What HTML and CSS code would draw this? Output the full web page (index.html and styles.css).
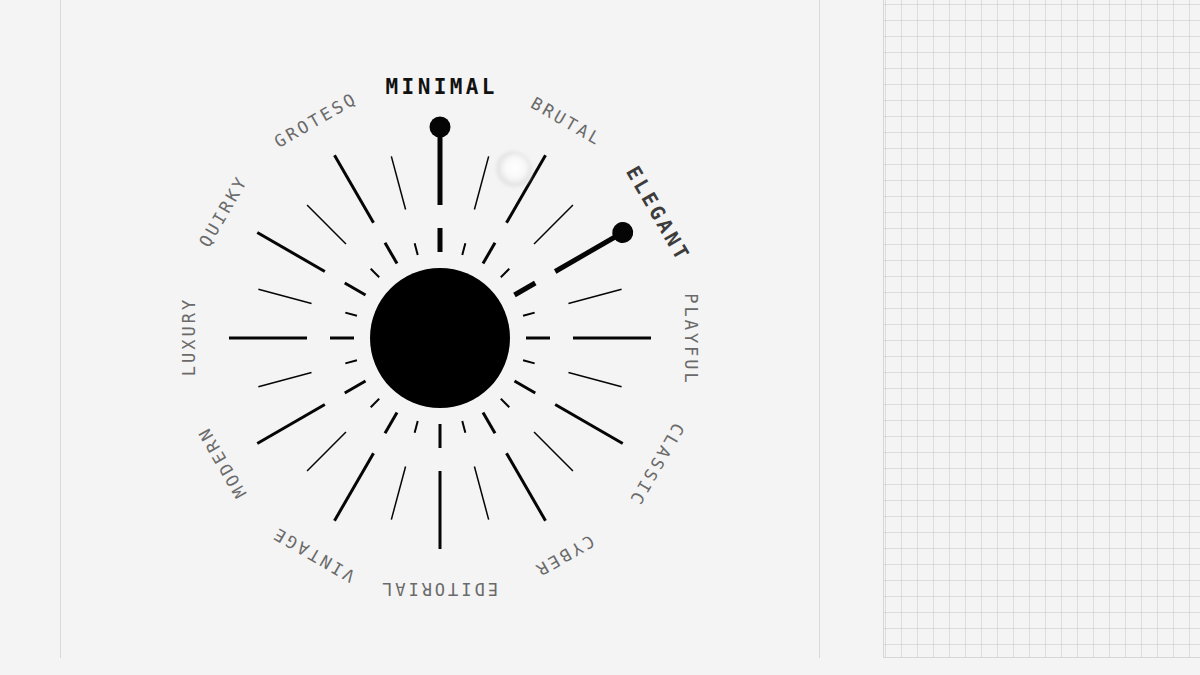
FILE: index.html
```html
<!DOCTYPE html>
<html lang="en">
<head>
<meta charset="utf-8">
<title>Style Dial</title>
<link rel="stylesheet" href="styles.css">
</head>
<body>
<div class="app">
  <div class="gutter"></div>
  <main class="stage">
    <svg class="dial" width="560" height="560" viewBox="0 0 560 560" xmlns="http://www.w3.org/2000/svg">
      <defs>
        <radialGradient id="ghostFill" cx="55%" cy="45%" r="55%">
          <stop offset="0%" stop-color="#ffffff"/>
          <stop offset="50%" stop-color="#f8f8f8"/>
          <stop offset="82%" stop-color="#e2e2e2"/>
          <stop offset="100%" stop-color="#ececec" stop-opacity="0"/>
        </radialGradient>
        <filter id="soft" x="-50%" y="-50%" width="200%" height="200%">
          <feGaussianBlur stdDeviation="1.4"/>
        </filter>
      </defs>
      <g transform="translate(280 280)">
        <g class="rays">
          <g transform="rotate(0)"><line class="ray active" y1="-86" y2="-110"/><line class="ray active" y1="-133" y2="-211"/><circle class="knob" cy="-211" r="10.5"/></g>
          <g transform="rotate(15)"><line class="ray minor-in" y1="-86" y2="-98"/><line class="ray minor-out" y1="-133" y2="-188"/></g>
          <g transform="rotate(30)"><line class="ray major" y1="-86" y2="-110"/><line class="ray major" y1="-133" y2="-211"/></g>
          <g transform="rotate(45)"><line class="ray minor-in" y1="-86" y2="-98"/><line class="ray minor-out" y1="-133" y2="-188"/></g>
          <g transform="rotate(60)"><line class="ray active" y1="-86" y2="-110"/><line class="ray active" y1="-133" y2="-211"/><circle class="knob" cy="-211" r="10.5"/></g>
          <g transform="rotate(75)"><line class="ray minor-in" y1="-86" y2="-98"/><line class="ray minor-out" y1="-133" y2="-188"/></g>
          <g transform="rotate(90)"><line class="ray major" y1="-86" y2="-110"/><line class="ray major" y1="-133" y2="-211"/></g>
          <g transform="rotate(105)"><line class="ray minor-in" y1="-86" y2="-98"/><line class="ray minor-out" y1="-133" y2="-188"/></g>
          <g transform="rotate(120)"><line class="ray major" y1="-86" y2="-110"/><line class="ray major" y1="-133" y2="-211"/></g>
          <g transform="rotate(135)"><line class="ray minor-in" y1="-86" y2="-98"/><line class="ray minor-out" y1="-133" y2="-188"/></g>
          <g transform="rotate(150)"><line class="ray major" y1="-86" y2="-110"/><line class="ray major" y1="-133" y2="-211"/></g>
          <g transform="rotate(165)"><line class="ray minor-in" y1="-86" y2="-98"/><line class="ray minor-out" y1="-133" y2="-188"/></g>
          <g transform="rotate(180)"><line class="ray major" y1="-86" y2="-110"/><line class="ray major" y1="-133" y2="-211"/></g>
          <g transform="rotate(195)"><line class="ray minor-in" y1="-86" y2="-98"/><line class="ray minor-out" y1="-133" y2="-188"/></g>
          <g transform="rotate(210)"><line class="ray major" y1="-86" y2="-110"/><line class="ray major" y1="-133" y2="-211"/></g>
          <g transform="rotate(225)"><line class="ray minor-in" y1="-86" y2="-98"/><line class="ray minor-out" y1="-133" y2="-188"/></g>
          <g transform="rotate(240)"><line class="ray major" y1="-86" y2="-110"/><line class="ray major" y1="-133" y2="-211"/></g>
          <g transform="rotate(255)"><line class="ray minor-in" y1="-86" y2="-98"/><line class="ray minor-out" y1="-133" y2="-188"/></g>
          <g transform="rotate(270)"><line class="ray major" y1="-86" y2="-110"/><line class="ray major" y1="-133" y2="-211"/></g>
          <g transform="rotate(285)"><line class="ray minor-in" y1="-86" y2="-98"/><line class="ray minor-out" y1="-133" y2="-188"/></g>
          <g transform="rotate(300)"><line class="ray major" y1="-86" y2="-110"/><line class="ray major" y1="-133" y2="-211"/></g>
          <g transform="rotate(315)"><line class="ray minor-in" y1="-86" y2="-98"/><line class="ray minor-out" y1="-133" y2="-188"/></g>
          <g transform="rotate(330)"><line class="ray major" y1="-86" y2="-110"/><line class="ray major" y1="-133" y2="-211"/></g>
          <g transform="rotate(345)"><line class="ray minor-in" y1="-86" y2="-98"/><line class="ray minor-out" y1="-133" y2="-188"/></g>
        </g>

        <circle class="core" r="70"/>

        <circle class="ghost" cx="73" cy="-168" r="19" fill="url(#ghostFill)" filter="url(#soft)"/>

        <g class="labels">
          <text class="label label-active" transform="rotate(0)" x="1.7" y="-251">MINIMAL</text>
          <text class="label" transform="rotate(30)" x="1.5" y="-251">BRUTAL</text>
          <text class="label label-hover" transform="rotate(60)" x="1.6" y="-251">ELEGANT</text>
          <text class="label" transform="rotate(90)" x="1.5" y="-251">PLAYFUL</text>
          <text class="label" transform="rotate(120)" x="1.5" y="-251">CLASSIC</text>
          <text class="label" transform="rotate(150)" x="1.5" y="-251">CYBER</text>
          <text class="label" transform="rotate(180)" x="1.5" y="-251">EDITORIAL</text>
          <text class="label" transform="rotate(210)" x="1.5" y="-251">VINTAGE</text>
          <text class="label" transform="rotate(240)" x="1.5" y="-251">MODERN</text>
          <text class="label" transform="rotate(270)" x="1.5" y="-251">LUXURY</text>
          <text class="label" transform="rotate(300)" x="1.5" y="-251">QUIRKY</text>
          <text class="label" transform="rotate(330)" x="1.5" y="-251">GROTESQ</text>
        </g>
      </g>
    </svg>
  </main>
  <div class="spacer"></div>
  <aside class="grid-panel"></aside>
</div>
</body>
</html>
```

FILE: styles.css
```css
* {
  box-sizing: border-box;
}

html, body {
  margin: 0;
  padding: 0;
}

body {
  background: #f4f4f4;
  font-family: "DejaVu Sans Mono", "Liberation Mono", monospace;
  width: 1200px;
  height: 675px;
  overflow: hidden;
}

.app {
  display: flex;
  height: 658px;
}

.gutter {
  width: 60px;
  flex: none;
}

.stage {
  width: 760px;
  flex: none;
  border-left: 1px solid #dadada;
  border-right: 1px solid #dadada;
  display: flex;
  justify-content: center;
  align-items: flex-start;
  padding-top: 58px;
}

.dial {
  display: block;
  overflow: visible;
}

.ray {
  stroke: #050505;
  stroke-linecap: butt;
}

.ray.major {
  stroke-width: 3;
}

.ray.active {
  stroke-width: 5;
}

.ray.minor-in {
  stroke-width: 2;
}

.ray.minor-out {
  stroke-width: 1.5;
}

.knob {
  fill: #050505;
}

.core {
  fill: #000000;
}

.label {
  font-family: "DejaVu Sans Mono", "Liberation Mono", monospace;
  font-size: 17px;
  letter-spacing: 3px;
  fill: #6a6a6a;
  text-anchor: middle;
  dominant-baseline: central;
}

.label-active {
  font-size: 21px;
  font-weight: 700;
  letter-spacing: 3.4px;
  fill: #111111;
}

.label-hover {
  font-size: 20px;
  font-weight: 700;
  letter-spacing: 3.2px;
  fill: #3c3c3c;
}

.spacer {
  width: 63px;
  flex: none;
}

.grid-panel {
  flex: 1;
  border-left: 1px solid #d6d6d6;
  border-bottom: 1px solid #d6d6d6;
  background-color: #f4f4f4;
  background-image:
    linear-gradient(to right, rgba(0, 0, 0, 0.095) 1px, transparent 1px),
    linear-gradient(to bottom, rgba(0, 0, 0, 0.095) 1px, transparent 1px);
  background-size: 16px 16px;
  background-position: 1px 4px;
}
```
